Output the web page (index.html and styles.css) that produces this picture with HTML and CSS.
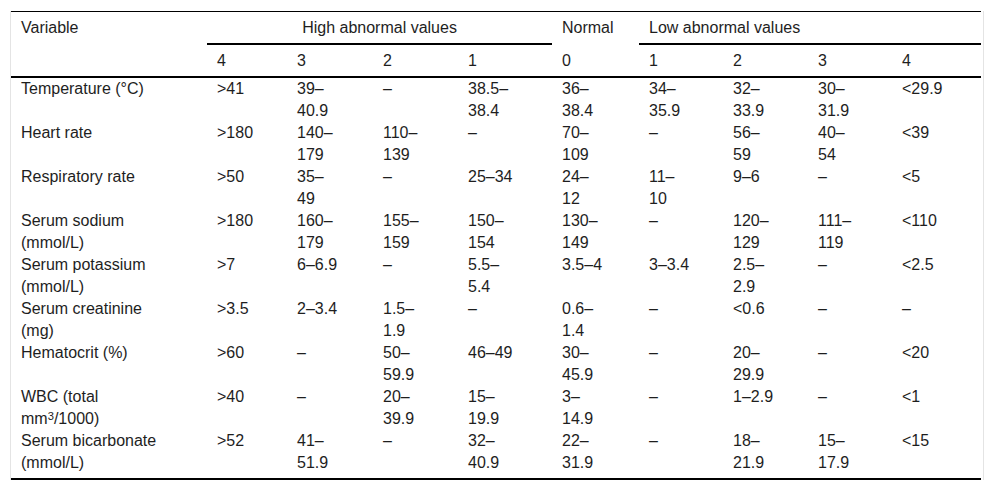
FILE: index.html
```html
<!DOCTYPE html>
<html lang="en">
<head>
<meta charset="utf-8">
<title>APACHE II physiological variables</title>
<link rel="stylesheet" href="styles.css">
</head>
<body>
<div class="frame">
  <table class="scores">
    <colgroup>
      <col class="c-var">
      <col class="c-h4">
      <col class="c-h3">
      <col class="c-h2">
      <col class="c-h1">
      <col class="c-n0">
      <col class="c-l1">
      <col class="c-l2">
      <col class="c-l3">
      <col class="c-l4">
    </colgroup>
    <thead>
      <tr>
        <th class="var" rowspan="2">Variable</th>
        <th class="group center" colspan="4">High abnormal values</th>
        <th>Normal</th>
        <th class="group" colspan="4">Low abnormal values</th>
      </tr>
      <tr class="sub">
        <th>4</th>
        <th>3</th>
        <th>2</th>
        <th>1</th>
        <th>0</th>
        <th>1</th>
        <th>2</th>
        <th>3</th>
        <th>4</th>
      </tr>
    </thead>
    <tbody>
      <tr>
        <td>Temperature (°C)</td><td>&gt;41</td><td>39–40.9</td><td>–</td><td>38.5–38.4</td><td>36–38.4</td><td>34–35.9</td><td>32–33.9</td><td>30–31.9</td><td>&lt;29.9</td>
      </tr>
      <tr>
        <td>Heart rate</td><td>&gt;180</td><td>140–179</td><td>110–139</td><td>–</td><td>70–109</td><td>–</td><td>56–59</td><td>40–54</td><td>&lt;39</td>
      </tr>
      <tr>
        <td>Respiratory rate</td><td>&gt;50</td><td>35–49</td><td>–</td><td>25–34</td><td>24–12</td><td>11–10</td><td>9–6</td><td>–</td><td>&lt;5</td>
      </tr>
      <tr>
        <td>Serum sodium (mmol/L)</td><td>&gt;180</td><td>160–179</td><td>155–159</td><td>150–154</td><td>130–149</td><td>–</td><td>120–129</td><td>111–119</td><td>&lt;110</td>
      </tr>
      <tr>
        <td>Serum potassium (mmol/L)</td><td>&gt;7</td><td>6–6.9</td><td>–</td><td>5.5–5.4</td><td>3.5–4</td><td>3–3.4</td><td>2.5–2.9</td><td>–</td><td>&lt;2.5</td>
      </tr>
      <tr>
        <td>Serum creatinine (mg)</td><td>&gt;3.5</td><td>2–3.4</td><td>1.5–1.9</td><td>–</td><td>0.6–1.4</td><td>–</td><td>&lt;0.6</td><td>–</td><td>–</td>
      </tr>
      <tr>
        <td>Hematocrit (%)</td><td>&gt;60</td><td>–</td><td>50–59.9</td><td>46–49</td><td>30–45.9</td><td>–</td><td>20–29.9</td><td>–</td><td>&lt;20</td>
      </tr>
      <tr>
        <td>WBC (total mm<sup>3</sup>/1000)</td><td>&gt;40</td><td>–</td><td>20–39.9</td><td>15–19.9</td><td>3–14.9</td><td>–</td><td>1–2.9</td><td>–</td><td>&lt;1</td>
      </tr>
      <tr>
        <td>Serum bicarbonate (mmol/L)</td><td>&gt;52</td><td>41–51.9</td><td>–</td><td>32–40.9</td><td>22–31.9</td><td>–</td><td>18–21.9</td><td>15–17.9</td><td>&lt;15</td>
      </tr>
    </tbody>
  </table>
</div>
</body>
</html>
```

FILE: styles.css
```css
body {
  margin: 0;
  background: #ffffff;
  font-family: "Liberation Sans", Arial, sans-serif;
  font-size: 16px;
  color: #1e1e1e;
}

.frame {
  margin: 11px 0 0 10px;
  width: 972px;
  border-left: 1px solid #e4e4e4;
  border-right: 1px solid #e4e4e4;
}

.scores {
  width: 970px;
  table-layout: fixed;
  border-collapse: separate;
  border-spacing: 0;
  border-top: 1px solid #000000;
  border-bottom: 2px solid #000000;
  line-height: 22px;
}

.c-var { width: 196px; }
.c-h4 { width: 80px; }
.c-h3 { width: 86px; }
.c-h2 { width: 85px; }
.c-h1 { width: 94px; }
.c-n0 { width: 87px; }
.c-l1 { width: 84px; }
.c-l2 { width: 85px; }
.c-l3 { width: 84px; }
.c-l4 { width: 89px; }

.scores th {
  font-weight: normal;
  text-align: left;
  vertical-align: top;
  padding: 5px 10px 4px 10px;
}

.scores th.center {
  text-align: center;
}

.scores th.group,
.scores th.var,
.scores .sub th {
  border-bottom: 2px solid #000000;
}

.scores td {
  vertical-align: top;
  padding: 0 34px 0 10px;
}

.scores td:nth-child(1) { padding-right: 40px; }
.scores td:nth-child(2) { padding-right: 20px; }
.scores td:nth-child(3) { padding-right: 34px; }
.scores td:nth-child(4) { padding-right: 33px; }
.scores td:nth-child(5) { padding-right: 36px; }
.scores td:nth-child(6) { padding-right: 35px; }
.scores td:nth-child(7) { padding-right: 32px; }
.scores td:nth-child(8) { padding-right: 33px; }
.scores td:nth-child(9) { padding-right: 32px; }
.scores td:nth-child(10) { padding-right: 19px; }

.scores tbody tr:last-child td {
  padding-bottom: 4px;
}

.scores sup {
  font-size: 0.7em;
  line-height: 0;
  vertical-align: 0.35em;
}
```
